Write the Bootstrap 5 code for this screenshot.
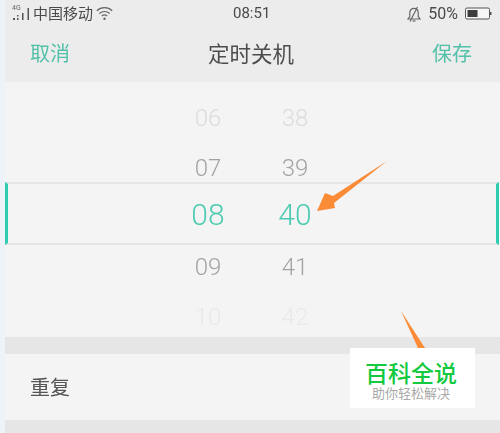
<!DOCTYPE html>
<html lang="en">
<head>
  <meta charset="UTF-8">
  <meta name="viewport" content="width=device-width, initial-scale=1.0">
  <title>定时关机</title>
  <link href="https://cdn.jsdelivr.net/npm/bootstrap@5.3.0/dist/css/bootstrap.min.css" rel="stylesheet">
  <style>
    html, body { height: 433px; overflow: hidden; }
    body {
      background: #eef2f9;
      font-family: "Noto Sans CJK SC", sans-serif;
      color: #4a4a4a;
    }
    .phone-shell {
      position: relative;
      width: 495px;
      height: 433px;
      margin-left: 5px;
      background: #f4f4f4;
      overflow: hidden;
    }
    .top-area { height: 82px; flex-shrink: 0; background: #ececec; filter: blur(.4px); }
    .status-row { height: 27px; padding: 0 8px 0 7px; font-size: 15px; color: #4a4a4a; }
    .status-left { gap: 3px; }
    .status-right { gap: 7px; }
    .signal-wrap { position: relative; width: 18px; height: 15px; }
    .signal-tag { position: absolute; left: 0; top: -2px; font-family: Roboto, sans-serif; font-size: 7px; line-height: 8px; color: #666; }
    .clock { font-family: Roboto, sans-serif; font-size: 15px; position: absolute; left: 228px; }
    .status-num { font-family: Roboto, sans-serif; font-size: 16px; }
    .title-row { height: 55px; padding: 0 28px 3px 25px; }
    .title-text { font-size: 21.5px; color: #4d4d4d; }
    .action-text { font-size: 20px; color: #52c1a9; }
    .picker-area { position: relative; height: 255px; flex-shrink: 0; filter: blur(.35px); }
    .picker-band {
      position: absolute;
      left: 0;
      right: 1px;
      top: 100px;
      height: 63px;
      border-top: 2px solid #e6e6e6;
      border-bottom: 2px solid #e6e6e6;
      border-left: 3px solid #2fcdb0;
      border-right: 3px solid #2fcdb0;
    }
    .wheel-cols { position: absolute; top: 11px; left: 177px; gap: 35px; }
    .wheel-col { width: 52px; font-family: Roboto, sans-serif; font-weight: 300; text-align: center; }
    .wheel-item { height: 50px; line-height: 50px; font-size: 24px; }
    .wheel-far { color: #dcdcdc; }
    .wheel-near { color: #a3a3a3; }
    .wheel-pick { color: #4ecbb2; font-size: 30px; height: 44px; line-height: 44px; margin-bottom: 5px; }
    .wheel-edge { color: #e9e9e9; }
    .gap-band { height: 17px; flex-shrink: 0; background: #e6e6e6; }
    .repeat-row { height: 66px; flex-shrink: 0; padding-left: 25px; font-size: 20px; color: #555; filter: blur(.3px); }
    .page-overlay { position: absolute; left: 0; top: 0; pointer-events: none; }
    .wm-box {
      position: absolute;
      left: 350px;
      top: 348px;
      width: 125px;
      height: 60px;
      background: #fff;
      text-align: center;
      padding: 11px 3px 0 0;
    }
    .wm-title { font-size: 23px; font-weight: 500; line-height: 26px; color: #12c93f; }
    .wm-sub { font-size: 13px; line-height: 15px; color: #a9a9a9; }
  </style>
</head>
<body>
  <div class="phone-shell d-flex flex-column">
    <div class="top-area">
      <div class="status-row d-flex align-items-center justify-content-between">
        <div class="status-left d-flex align-items-center">
          <div class="signal-wrap">
            <span class="signal-tag">4G</span>
            <svg class="d-block" width="18" height="15" viewBox="0 0 18 15" fill="#555">
              <rect x="1" y="12" width="2" height="2"/><rect x="5" y="9" width="1.500" height="1.500"/><rect x="5" y="12" width="1.500" height="2"/>
              <rect x="10" y="7" width="1.500" height="7"/><rect x="15.500" y="2" width="1.500" height="12"/>
            </svg>
          </div>
          <span>中国移动</span>
          <svg width="17" height="15" viewBox="0 0 17 15" fill="none" stroke="#666" stroke-width="1.200">
            <path d="M.8 4.800C5 .6 12 .6 16.200 4.800"/><path d="M3.300 7.500C6.300 4.800 10.700 4.800 13.700 7.500"/><path d="M5.800 10c1.500-1.200 3.900-1.200 5.400 0"/>
            <circle cx="8.500" cy="12.800" r="1.200" fill="#666" stroke="none"/>
          </svg>
        </div>
        <span class="clock">08:51</span>
        <div class="status-right d-flex align-items-center">
          <svg width="14" height="16" viewBox="0 0 14 16" fill="none" stroke="#666" stroke-width="1.200">
            <path d="M1 13h12l-1.800-2.500V6.500C11.200 4 9.300 2.300 7 2.300S2.800 4 2.800 6.500v4z"/><path d="M5.500 15h3"/><path d="M10.500 1L3 15.500"/>
          </svg>
          <span class="status-num">50%</span>
          <svg width="27" height="13" viewBox="0 0 27 13">
            <rect x=".5" y="1" width="24" height="11" rx="1.500" fill="#f6f6f6" stroke="#555"/>
            <rect x="2.500" y="3" width="10" height="7" fill="#3d3d3d"/>
            <rect x="25" y="5" width="1.500" height="3" fill="#555"/>
          </svg>
        </div>
      </div>
      <div class="title-row d-flex align-items-center justify-content-between">
        <span class="action-text">取消</span>
        <span class="title-text">定时关机</span>
        <span class="action-text">保存</span>
      </div>
    </div>

    <div class="picker-area">
      <div class="picker-band"></div>
      <div class="wheel-cols d-flex">
        <div class="wheel-col">
          <div class="wheel-item wheel-far">06</div>
          <div class="wheel-item wheel-near">07</div>
          <div class="wheel-item wheel-pick">08</div>
          <div class="wheel-item wheel-near">09</div>
          <div class="wheel-item wheel-edge">10</div>
        </div>
        <div class="wheel-col">
          <div class="wheel-item wheel-far">38</div>
          <div class="wheel-item wheel-near">39</div>
          <div class="wheel-item wheel-pick">40</div>
          <div class="wheel-item wheel-near">41</div>
          <div class="wheel-item wheel-edge">42</div>
        </div>
      </div>
    </div>

    <div class="gap-band"></div>
    <div class="repeat-row d-flex align-items-center">重复</div>
    <div class="gap-band flex-grow-1"></div>
  </div>

  <svg class="page-overlay" width="500" height="433" viewBox="0 0 500 433">
    <path d="M387 161L333 196L325 193L317 211L335 208L334 203z" fill="#fb8b36"/>
    <path d="M401 311L425 348H418z" fill="#fb8b36"/>
  </svg>
  <div class="wm-box">
    <div class="wm-title">百科全说</div>
    <div class="wm-sub">助你轻松解决</div>
  </div>
</body>
</html>
